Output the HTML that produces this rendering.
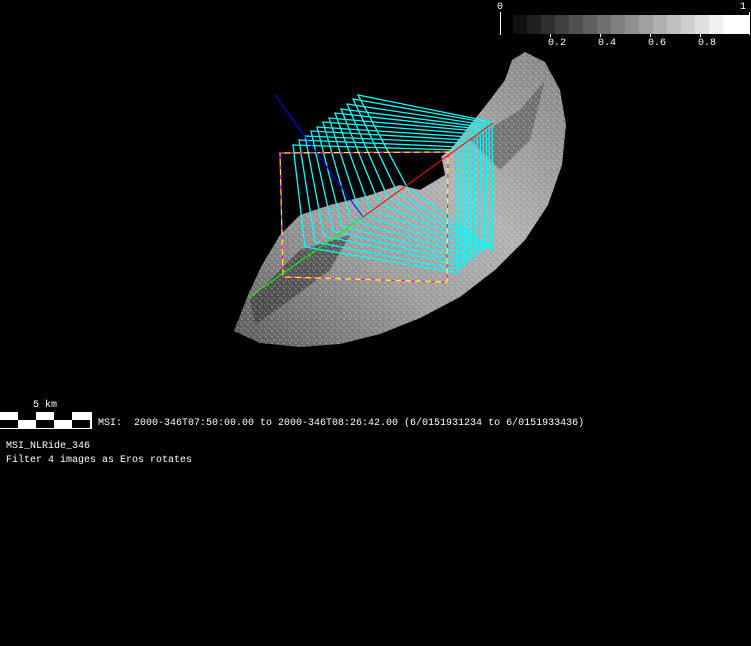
<!DOCTYPE html>
<html><head><meta charset="utf-8"><style>
html,body{margin:0;padding:0;background:#000;width:751px;height:646px;overflow:hidden}
.t{position:absolute;color:#fff;font-family:"Liberation Mono",monospace;font-size:10px;line-height:11px;white-space:pre}
</style></head><body>
<svg width="751" height="646" style="position:absolute;left:0;top:0" xmlns="http://www.w3.org/2000/svg">
<defs>
<linearGradient id="g1" x1="0" y1="1" x2="1" y2="0">
<stop offset="0" stop-color="#555"/><stop offset="0.35" stop-color="#9a9a9a"/><stop offset="0.6" stop-color="#b0b0b0"/><stop offset="1" stop-color="#808080"/>
</linearGradient>
<pattern id="dots" width="6" height="6" patternUnits="userSpaceOnUse">
<path d="M1 1h2M4 3v2M0 5h1" stroke="#eee" stroke-width="1"/>
</pattern>
</defs>
<path id="ast" d="M234,331 L260,343 L300,347 L340,344 L380,334 L420,318 L460,297 L495,270 L525,240 L548,205 L562,165 L566,125 L560,90 L545,62 L525,52 L512,60 L505,80 L490,100 L470,125 L450,150 L430,165 L400,185 L370,195 L330,205 L300,215 L280,235 L262,265 L248,295 Z" fill="url(#g1)"/>
<path d="M250,300 L300,250 L350,235 L330,270 L290,300 L255,325 Z" fill="#333" opacity="0.6"/>
<path d="M470,140 L520,110 L545,80 L530,140 L500,170 Z" fill="#555" opacity="0.6"/>
<path d="M234,331 L260,343 L300,347 L340,344 L380,334 L420,318 L460,297 L495,270 L525,240 L548,205 L562,165 L566,125 L560,90 L545,62 L525,52 L512,60 L505,80 L490,100 L470,125 L450,150 L430,165 L400,185 L370,195 L330,205 L300,215 L280,235 L262,265 L248,295 Z" fill="url(#dots)" opacity="0.5"/>
<path d="M400,150 L440,150 L445,175 L420,190 L400,185 Z" fill="#000"/>
<g fill="none" stroke="#00ffff" stroke-width="1.3">
<path d="M293,145 L457,150 L457,273 L305,247 Z"/>
<path d="M299,140 L461,147 L460,270 L315,242 Z"/>
<path d="M305,136 L464,143 L464,266 L324,236 Z"/>
<path d="M311,131 L467,140 L467,263 L333,231 Z"/>
<path d="M317,127 L470,137 L471,260 L342,226 Z"/>
<path d="M323,122 L474,134 L475,257 L351,220 Z"/>
<path d="M329,118 L477,131 L478,254 L360,214 Z"/>
<path d="M335,113 L480,129 L482,251 L370,209 Z"/>
<path d="M341,109 L483,127 L485,249 L379,203 Z"/>
<path d="M347,104 L486,125 L488,247 L388,198 Z"/>
<path d="M353,99 L489,123 L490,249 L397,192 Z"/>
<path d="M358,95 L492,122 L493,250 L407,187 Z"/>
</g>
<path d="M280,153 L448,152 L447,282 L283,277 Z" fill="none" stroke="#ffff00" stroke-width="1.2"/>
<path d="M280,153 L448,152 L447,282 L283,277 Z" fill="none" stroke="#ff00ff" stroke-width="1.2" stroke-dasharray="4 6"/>
<line x1="275" y1="95" x2="363" y2="217" stroke="#0000ff"/>
<line x1="363" y1="217" x2="493" y2="123" stroke="#ff0000"/>
<line x1="363" y1="217" x2="248" y2="298" stroke="#00ff00"/>
<line x1="500.5" y1="12" x2="500.5" y2="35" stroke="#fff"/>
<line x1="749.5" y1="12" x2="749.5" y2="35" stroke="#fff"/>
<g>
<rect x="513" y="15" width="14" height="19" fill="#101010"/>
<rect x="527" y="15" width="14" height="19" fill="#1f1f1f"/>
<rect x="541" y="15" width="14" height="19" fill="#2f2f2f"/>
<rect x="555" y="15" width="14" height="19" fill="#3f3f3f"/>
<rect x="569" y="15" width="14" height="19" fill="#4f4f4f"/>
<rect x="583" y="15" width="14" height="19" fill="#5f5f5f"/>
<rect x="597" y="15" width="14" height="19" fill="#6f6f6f"/>
<rect x="611" y="15" width="14" height="19" fill="#7f7f7f"/>
<rect x="625" y="15" width="14" height="19" fill="#8f8f8f"/>
<rect x="639" y="15" width="14" height="19" fill="#9f9f9f"/>
<rect x="653" y="15" width="14" height="19" fill="#afafaf"/>
<rect x="667" y="15" width="14" height="19" fill="#bfbfbf"/>
<rect x="681" y="15" width="14" height="19" fill="#cfcfcf"/>
<rect x="695" y="15" width="14" height="19" fill="#dfdfdf"/>
<rect x="709" y="15" width="14" height="19" fill="#efefef"/>
<rect x="723" y="15" width="27" height="19" fill="#ffffff"/>
</g>
<g stroke="#fff"><line x1="550.5" y1="34" x2="550.5" y2="37"/><line x1="600.5" y1="34" x2="600.5" y2="37"/><line x1="650.5" y1="34" x2="650.5" y2="37"/><line x1="700.5" y1="34" x2="700.5" y2="37"/></g>
<rect x="0" y="412" width="92" height="17" fill="#fff"/>
<rect x="18" y="412" width="18" height="8" fill="#000"/>
<rect x="54" y="412" width="18" height="8" fill="#000"/>
<rect x="0" y="420" width="18" height="8" fill="#000"/>
<rect x="36" y="420" width="18" height="8" fill="#000"/>
<rect x="72" y="420" width="18" height="8" fill="#000"/>
</svg>
<div class="t" style="left:497px;top:2px">0</div>
<div class="t" style="left:740px;top:2px">1</div>
<div class="t" style="left:548px;top:38px">0.2</div>
<div class="t" style="left:598px;top:38px">0.4</div>
<div class="t" style="left:648px;top:38px">0.6</div>
<div class="t" style="left:698px;top:38px">0.8</div>
<div class="t" style="left:33px;top:400px">5 km</div>
<div class="t" style="left:98px;top:418px">MSI:  2000-346T07:50:00.00 to 2000-346T08:26:42.00 (6/0151931234 to 6/0151933436)</div>
<div class="t" style="left:6px;top:441px">MSI_NLRide_346</div>
<div class="t" style="left:6px;top:455px">Filter 4 images as Eros rotates</div>
</body></html>
